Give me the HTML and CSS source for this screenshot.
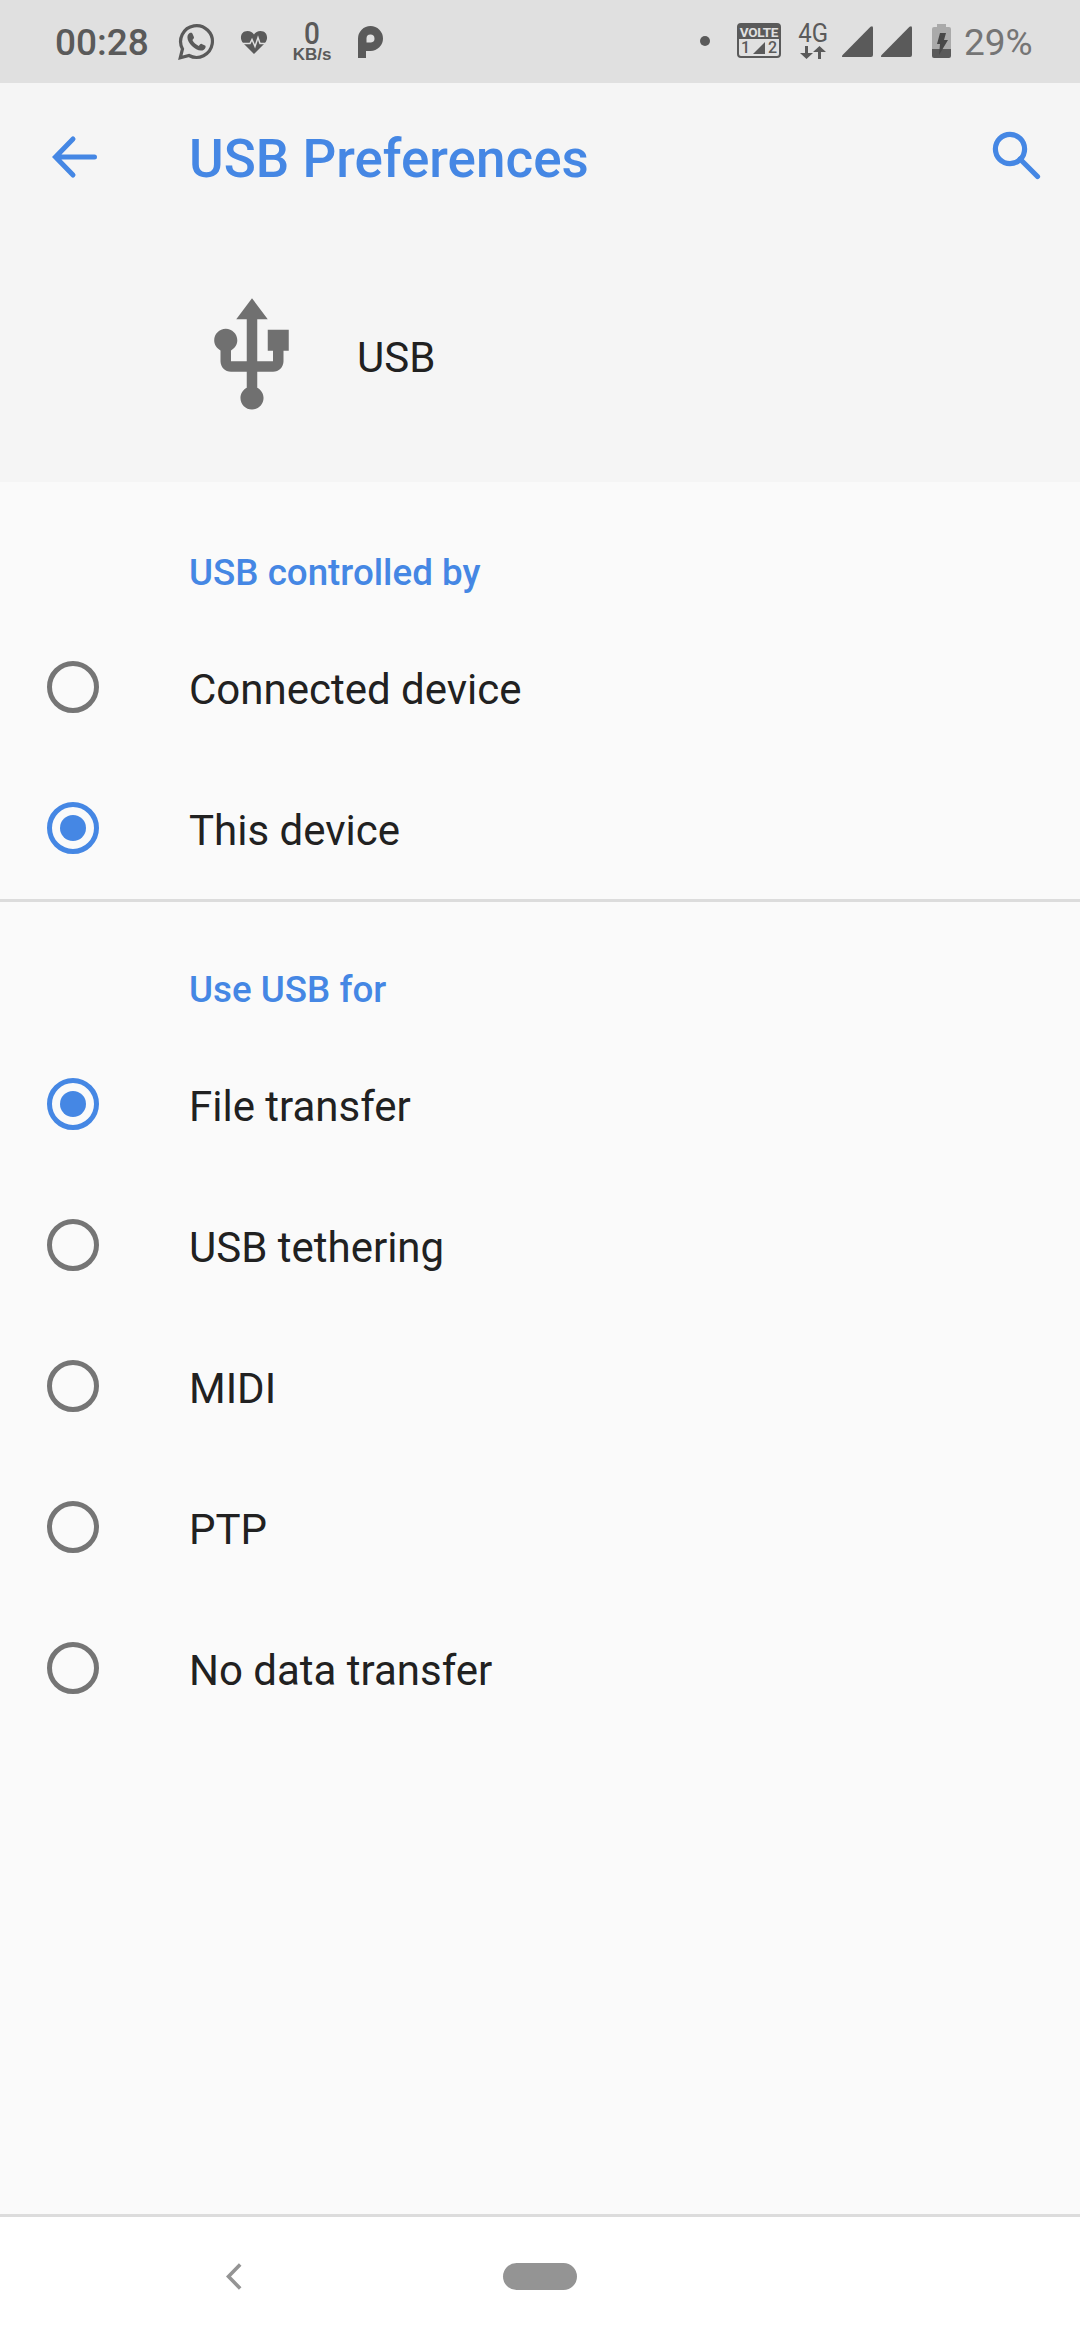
FILE: index.html
```html
<!DOCTYPE html>
<html lang="en">
<head>
<meta charset="utf-8">
<title>USB Preferences</title>
<link rel="stylesheet" href="styles.css">
</head>
<body>
<header class="status">
  <div class="status-left">
    <span class="clock">00:28</span>
    <svg class="whatsapp" width="38" height="38" viewBox="0 0 38 38">
      <path d="M3.3 34.7 5.5 26A15.900 15.900 0 1 1 12 32.500Z" fill="none" stroke="#5a5a5a" stroke-width="3.200"/>
      <path d="M10.400 14.200c0-2.400 1.600-4.200 2.800-4.400 1.500-.3 2 .2 2.400 1.100l1.300 3.100c.3.800 0 1.300-1.500 3 1.300 2.700 3.500 4.700 6.400 5.900 1.400-1.600 1.900-2.400 2.900-2l3.300 1.700c.7.4.7.8.5 1.800-.5 2.200-2.700 3.200-4.600 3.100-5.800-.2-13.500-7.600-13.500-13.300Z" fill="#5a5a5a"/>
    </svg>
    <svg class="heart" width="28" height="25" viewBox="0 0 28 25">
      <path d="M14 24 3 13C-1 8 1 1 7.500 1c3 0 5 1.300 6.500 3.500C15.500 2.300 17.500 1 20.500 1 27 1 29 8 25 13Z" fill="#5a5a5a"/>
      <path d="M0 13.500h10l2-4 3 7 3-9 2 6h8" fill="none" stroke="#e0e0e0" stroke-width="1.500"/>
    </svg>
    <div class="speed"><span class="speed-num">0</span><span class="speed-unit">KB/s</span></div>
    <svg class="parallel" width="25" height="32" viewBox="0 0 25 32">
      <path d="M0 32V12.500a12.500 12.500 0 1 1 12.500 12.500H8v7ZM8.500 16.500h4.500a4 4 0 1 0-4.500-4Z" fill="#5a5a5a" fill-rule="evenodd"/>
    </svg>
  </div>
  <div class="status-right">
    <span class="dot"></span>
    <div class="volte">
      <span class="volte-label">VOLTE</span>
      <div class="volte-sims"><span>1</span><svg width="12" height="12" viewBox="0 0 12 12"><path d="M0 12 12 0v12Z" fill="#5a5a5a"/></svg><span>2</span></div>
    </div>
    <div class="network">
      <span class="network-type">4G</span>
      <svg width="26" height="13" viewBox="0 0 26 13"><path d="M5 0h3v7h5l-6.500 6L0 7h5ZM18 13V6h-5l6.500-6L26 6h-5v7Z" fill="#5a5a5a"/></svg>
    </div>
    <svg class="signal" width="31" height="31" viewBox="0 0 31 31"><path d="M1 31Q-1 31 .6 29L28.500.8Q31-1 31 2v27q0 2-2 2Z" fill="#5a5a5a"/></svg>
    <svg class="signal signal-second" width="31" height="31" viewBox="0 0 31 31"><path d="M1 31Q-1 31 .6 29L28.500.8Q31-1 31 2v27q0 2-2 2Z" fill="#5a5a5a"/></svg>
    <svg class="battery" width="19" height="34" viewBox="0 0 19 34">
      <path d="M5 0h9v3h3q2 0 2 2v20H0V5q0-2 2-2h3Z" fill="#aaa"/>
      <path d="M0 25h19v7q0 2-2 2H2q-2 0-2-2Z" fill="#5a5a5a"/>
      <path d="M8 9h6l-2 7h4L7 31l1-11H5Z" fill="#484848"/>
    </svg>
    <span class="percent">29%</span>
  </div>
</header>

<div class="top">
  <div class="appbar">
    <svg class="back" width="50" height="50" viewBox="0 0 50 50"><path d="M44.500 25H6M23 7 5.500 25 23 43" fill="none" stroke="#4587e4" stroke-width="5" stroke-linecap="round"/></svg>
    <h1 class="title">USB Preferences</h1>
    <svg class="search" width="52" height="50" viewBox="0 0 52 50"><circle cx="20" cy="19" r="14.600" fill="none" stroke="#4587e4" stroke-width="5.200"/><path d="M34.500 33.500l13 13M30 29l5 5" fill="none" stroke="#4587e4" stroke-width="5.200" stroke-linecap="round"/></svg>
  </div>
  <div class="entity">
    <svg width="126" height="126" viewBox="0 0 24 24"><path fill="#707070" d="M15 7v4h1v2h-3V5h2l-3-4-3 4h2v8H8v-2.070c.7-.37 1.200-1.080 1.200-1.930 0-1.210-.99-2.200-2.200-2.200-1.210 0-2.200.99-2.200 2.200 0 .85.5 1.560 1.200 1.930V13c0 1.110.89 2 2 2h3v3.050c-.71.37-1.200 1.100-1.200 1.950 0 1.220.99 2.200 2.200 2.200 1.210 0 2.200-.98 2.200-2.200 0-.85-.49-1.580-1.200-1.950V15h3c1.110 0 2-.89 2-2v-2h1V7h-4z"/></svg>
    <span class="entity-name">USB</span>
  </div>
</div>

<main class="content">
  <section>
    <h2 class="heading">USB controlled by</h2>
    <div class="row"><span class="radio"></span><span class="label">Connected device</span></div>
    <div class="row"><span class="radio checked"></span><span class="label">This device</span></div>
  </section>
  <section>
    <h2 class="heading divided">Use USB for</h2>
    <div class="row"><span class="radio checked"></span><span class="label">File transfer</span></div>
    <div class="row"><span class="radio"></span><span class="label">USB tethering</span></div>
    <div class="row"><span class="radio"></span><span class="label">MIDI</span></div>
    <div class="row"><span class="radio"></span><span class="label">PTP</span></div>
    <div class="row"><span class="radio"></span><span class="label">No data transfer</span></div>
  </section>
</main>

<nav class="navbar">
  <svg width="16" height="27" viewBox="0 0 16 27"><path d="M14.200 1.500 2.500 13.500l11.700 12" fill="none" stroke="#949494" stroke-width="3.600"/></svg>
  <span class="pill"></span>
</nav>
</body>
</html>
```
FILE: styles.css
```css
* { box-sizing: border-box; }

body {
  margin: 0;
  height: 2340px;
  display: flex;
  flex-direction: column;
  background: #fafafa;
  color: #212121;
  font-family: Roboto, sans-serif;
  overflow: hidden;
}

svg { display: block; flex: none; }
h1, h2 { margin: 0; font-weight: 500; }

/* Status bar */
.status {
  height: 83px;
  flex: none;
  display: flex;
  justify-content: space-between;
  background: #e0e0e0;
  color: #5a5a5a;
}
.status-left, .status-right { display: flex; align-items: flex-start; }
.status-left { padding-left: 55px; }
.status-right { padding-right: 47px; }

.clock, .percent {
  font-size: 37px;
  line-height: 44px;
  padding-top: 21px;
  white-space: nowrap;
}
.clock { width: 122px; font-weight: 500; }
.percent { width: 69px; margin-left: 13px; color: #757575; }
.whatsapp { margin-top: 23px; }
.heart { margin: 30px 0 0 25px; }
.speed {
  width: 44px;
  margin: 21px 0 0 22px;
  display: flex;
  flex-direction: column;
  align-items: center;
}
.speed-num {
  font-size: 31px;
  font-weight: 500;
  line-height: 26px;
  transform: scaleX(0.9);
}
.speed-unit {
  font-family: "Liberation Sans", sans-serif;
  font-size: 17px;
  font-weight: 700;
  line-height: 16px;
}
.parallel { margin: 26px 0 0 24px; }

.dot {
  width: 10px;
  height: 10px;
  margin-top: 36px;
  border-radius: 50%;
  background: #5a5a5a;
}
.volte {
  width: 44px;
  height: 35px;
  margin: 23px 0 0 27px;
  display: flex;
  flex-direction: column;
  border: 2px solid #5a5a5a;
  border-radius: 4px;
}
.volte-label {
  height: 14px;
  background: #5a5a5a;
  color: #e0e0e0;
  font-size: 13.5px;
  font-weight: 700;
  line-height: 14px;
  text-align: center;
  letter-spacing: -0.3px;
}
.volte-sims {
  flex: 1;
  display: flex;
  align-items: center;
  justify-content: center;
  gap: 3px;
  font-size: 16px;
  font-weight: 500;
  line-height: 17px;
}
.network {
  width: 30px;
  margin: 21px 0 0 17px;
  display: flex;
  flex-direction: column;
  align-items: center;
}
.network-type {
  height: 25px;
  font-size: 26px;
  line-height: 25px;
  transform: scaleX(0.92);
}
.signal { margin: 26px 0 0 14px; }
.signal-second { margin-left: 8px; }
.battery { margin: 24px 0 0 20px; }

/* App bar and device header */
.top { height: 399px; flex: none; background: #f5f5f5; }
.appbar {
  height: 147px;
  display: flex;
  align-items: center;
  padding: 0 38px 0 50px;
  color: #4587e4;
}
.title {
  flex: 1;
  margin-left: 89px;
  padding-top: 5px;
  font-size: 53px;
  line-height: 62px;
}
.search { margin-top: -3px; }
.entity {
  display: flex;
  align-items: center;
  gap: 42px;
  padding: 63px 0 0 189px;
}
.entity-name { padding-top: 3px; font-size: 42px; }

/* Option lists */
.content { flex: 1; }
.heading {
  height: 135px;
  padding: 69px 0 0 189px;
  color: #4587e4;
  font-size: 36.75px;
  line-height: 44px;
}
.divided { border-top: 3px solid #dcdcdc; padding-top: 66px; }
.row {
  height: 141px;
  display: flex;
  align-items: center;
  padding-left: 47px;
}
.radio {
  width: 52px;
  height: 52px;
  flex: none;
  display: grid;
  place-items: center;
  margin-bottom: 2px;
  border: 5px solid #757575;
  border-radius: 50%;
}
.checked { border-color: #4587e4; }
.checked::before {
  content: "";
  width: 26px;
  height: 26px;
  border-radius: 50%;
  background: #4587e4;
}
.label {
  margin-left: 90px;
  padding-top: 4px;
  font-size: 42px;
  line-height: 50px;
}

/* Navigation bar */
.navbar {
  height: 126px;
  flex: none;
  display: flex;
  align-items: flex-start;
  gap: 261px;
  padding: 46px 0 0 226px;
  border-top: 3px solid #dcdcdc;
  background: #fff;
}
.pill { width: 74px; height: 27px; border-radius: 14px; background: #949494; }
```
